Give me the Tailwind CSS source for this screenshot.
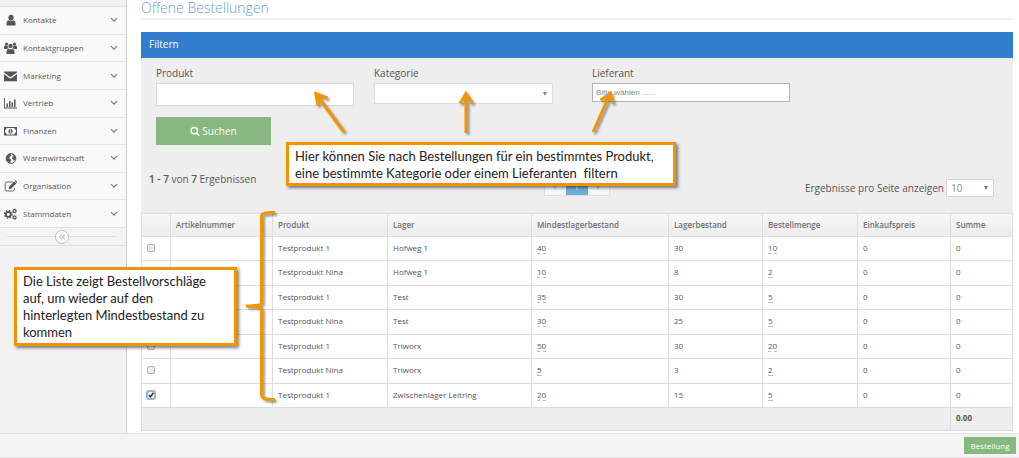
<!DOCTYPE html>
<html lang="de">
<head>
<meta charset="utf-8">
<title>Offene Bestellungen</title>
<script src="https://cdn.jsdelivr.net/npm/@tailwindcss/browser@4"></script>
</head>
<body class="relative flex min-h-screen flex-col overflow-x-hidden bg-white font-['Open_Sans',sans-serif] text-[8px] text-[#555]">
<svg class="hidden">
  <symbol id="chev" viewBox="0 0 8 6"><path d="M1 1.2 4 4.2 7 1.2" fill="none" stroke="#777" stroke-width="1.2"/></symbol>
</svg>

<div class="flex flex-1">
  <aside class="w-[127px] shrink-0 border-r border-[#ccc] bg-[#f2f2f2] pt-1.5">
    <nav class="grid h-[221px] grid-rows-8 bg-[#f9f9f9] text-[8px] text-[#585858]">
      <a href="#" class="flex items-center border-t border-[#e4e4e4] pr-2 pl-1">
        <svg class="mr-1.5 h-3 w-[13px]" viewBox="0 0 13 12" fill="#555"><ellipse cx="7" cy="3.8" rx="2.6" ry="3"/><path d="M2.500 11.500V9.500C2.500 7.800 3.400 6.600 4.700 6.300C6 7.600 8 7.600 9.300 6.300C10.600 6.600 11.500 7.800 11.500 9.500V11.500Z"/></svg>
        <span class="flex-1">Kontakte</span><svg class="h-1.5 w-2"><use href="#chev"/></svg></a>
      <a href="#" class="flex items-center border-t border-[#e4e4e4] pr-2 pl-1">
        <svg class="mr-1.5 h-3 w-[13px]" viewBox="0 0 13 12" fill="#555"><circle cx="2.500" cy="2" r="1.600"/><circle cx="10.500" cy="2" r="1.600"/><circle cx="6.500" cy="3.900" r="2.200"/><path d="M0 7V5.200C0 4.200 .7 3.600 1.500 3.600H3.700C3.600 5 4 5.700 4.600 6.300C3.900 6.400 3.300 6.600 2.900 7ZM13 7V5.200C13 4.200 12.300 3.600 11.500 3.600H9.300C9.400 5 9 5.700 8.400 6.300C9.100 6.400 9.700 6.600 10.100 7ZM2.500 12V9.800C2.500 8 3.500 6.900 4.800 6.700C5.800 7.400 7.200 7.400 8.200 6.700C9.500 6.900 10.500 8 10.500 9.800V12Z"/></svg>
        <span class="flex-1">Kontaktgruppen</span><svg class="h-1.5 w-2"><use href="#chev"/></svg></a>
      <a href="#" class="flex items-center border-t border-[#e4e4e4] pr-2 pl-1">
        <svg class="mr-1.5 h-3 w-[13px]" viewBox="0 0 13 12" fill="#555"><path d="M0 1.500h13v1L6.500 7.300 0 2.500zM0 4l5.300 4q1.200.900 2.400 0L13 4v7.300H0z"/></svg>
        <span class="flex-1">Marketing</span><svg class="h-1.5 w-2"><use href="#chev"/></svg></a>
      <a href="#" class="flex items-center border-t border-[#e4e4e4] pr-2 pl-1">
        <svg class="mr-1.5 h-3 w-[13px]" viewBox="0 0 13 12" fill="#555"><path d="M0 1h.9v9.600H13v.900H0zM2.500 6.500h1.500V10H2.500zM5 4h1.500v6H5zM7.500 5.500H9V10H7.500zM10 2.500h1.500V10H10z"/></svg>
        <span class="flex-1">Vertrieb</span><svg class="h-1.5 w-2"><use href="#chev"/></svg></a>
      <a href="#" class="flex items-center border-t border-[#e4e4e4] pr-2 pl-1">
        <svg class="mr-1.5 h-3 w-[13px]" viewBox="0 0 13 12"><path fill="#555" fill-rule="evenodd" d="M0 2h13v8.500H0zM2.700 3Q2.500 4.700 1 4.900v2.700Q2.500 7.800 2.700 9.500h7.600Q10.500 7.800 12 7.600V4.900Q10.500 4.700 10.300 3z"/><ellipse cx="6.500" cy="6.250" rx="2" ry="2.600" fill="#555"/><path d="M5.800 5.200 6.600 4.600v3M5.700 7.800h1.700" stroke="#fff" stroke-width=".8" fill="none"/></svg>
        <span class="flex-1">Finanzen</span><svg class="h-1.5 w-2"><use href="#chev"/></svg></a>
      <a href="#" class="flex items-center border-t border-[#e4e4e4] pr-2 pl-1">
        <svg class="mr-1.5 h-3 w-[13px]" viewBox="0 0 13 12"><circle cx="7" cy="6.500" r="4.900" fill="#f9f9f9" stroke="#555" stroke-width="1"/><path fill="#555" d="M2.200 5.500C2.700 3.300 4.500 1.700 7 1.600L6.500 2.800 7.700 3.300 6.500 4.400 5.300 4.900 5.600 6 4.500 6.300 6.300 7l1.200 1L6.600 9.600 6 11.300C4 10.800 2 8.500 2.200 5.500zM8.200 1.700C10.200 2.100 11.800 3.800 12 6L11 7.500 9.800 9 9 7.200 7.800 6.400 8.600 4.700 9.800 4.500 9.200 3.500 8.200 3z"/></svg>
        <span class="flex-1">Warenwirtschaft</span><svg class="h-1.5 w-2"><use href="#chev"/></svg></a>
      <a href="#" class="flex items-center border-t border-[#e4e4e4] pr-2 pl-1">
        <svg class="mr-1.5 h-3 w-[13px]" viewBox="0 0 13 12"><path d="M9 2H3Q1.200 2 1.200 3.800v5.400Q1.200 11 3 11h5.600q1.800 0 1.800-1.800V7.800" fill="none" stroke="#666" stroke-width="1"/><path fill="#555" d="M4.800 9V6.900L10.200 1.500 12.300 3.600 6.900 9zM10.700 1l.6-.5q.4-.3.800 0L13 1.500q.3.400 0 .8l-.500.700z"/></svg>
        <span class="flex-1">Organisation</span><svg class="h-1.5 w-2"><use href="#chev"/></svg></a>
      <a href="#" class="flex items-center border-t border-[#e4e4e4] pr-2 pl-1">
        <svg class="mr-1.5 h-3 w-[13px]" viewBox="0 0 13 12" fill="none" stroke="#555"><circle cx="4.300" cy="6.300" r="2.500" stroke-width="1.800"/><circle cx="4.300" cy="6.300" r="3.900" stroke-width="1.200" stroke-dasharray="1.500 1.563"/><circle cx="10.600" cy="3" r="1.400" stroke-width="1.100"/><circle cx="10.600" cy="3" r="2.200" stroke-width=".6" stroke-dasharray=".9 .828"/><circle cx="10.600" cy="9.400" r="1.400" stroke-width="1.100"/><circle cx="10.600" cy="9.400" r="2.200" stroke-width=".6" stroke-dasharray=".9 .828"/></svg>
        <span class="flex-1">Stammdaten</span><svg class="h-1.5 w-2"><use href="#chev"/></svg></a>
    </nav>
    <div class="flex h-[19px] items-center border-y border-[#e0e0e0] bg-[#f3f3f3] pr-2.5 pl-[7px]">
      <span class="h-px flex-1 bg-[#dedede]"></span>
      <button type="button" aria-label="Menü einklappen" class="flex size-3.5 items-center justify-center rounded-full border border-[#bbb] bg-white">
        <svg class="size-2" viewBox="0 0 8 8" fill="none" stroke="#999"><path d="M4 1.500 1.500 4 4 6.500M7 1.500 4.500 4 7 6.500"/></svg></button>
      <span class="h-px flex-1 bg-[#dedede]"></span>
    </div>
  </aside>

  <main class="min-w-0 flex-1 pr-1.5 pb-0.5 pl-3.5">
    <h1 class="h-5 border-b-2 border-[#edf2f6] text-[14px] leading-4 font-light text-[#6c9fd2]">Offene Bestellungen</h1>
    <section class="mt-3 bg-[#eee]">
      <h2 class="flex h-[26px] items-center bg-[#307ecc] px-2 pb-0.5 text-[10px] text-white">Filtern</h2>
      <form class="h-[155px]">
        <div class="flex pt-[7px] pl-[15px] text-[10px] leading-4">
          <div class="w-[218px]"><label for="produkt" class="block">Produkt</label>
            <input id="produkt" type="text" class="mt-0.5 block h-[23px] w-[198px] border border-[#d8d8d8] bg-white px-1"></div>
          <div class="w-[218px]"><label for="kategorie" class="block">Kategorie</label>
            <div class="relative mt-0.5 w-[179px]"><select id="kategorie" class="block h-[21px] w-full appearance-none border border-[#dcdcdc] bg-white px-1"><option></option></select>
            <svg class="pointer-events-none absolute top-[9px] right-1.5 h-1 w-1" viewBox="0 0 4 4"><path d="M0 0h4L2 4z" fill="#888"/></svg></div></div>
          <div class="w-[218px]"><label for="lieferant" class="block">Lieferant</label>
            <input id="lieferant" type="text" placeholder="Bitte wählen ......" class="mt-0.5 block h-[19px] w-[198px] border border-[#b4b4b4] bg-white px-[3px] font-['Liberation_Sans',sans-serif] text-[8px] placeholder:text-[#888]"></div>
        </div>
        <button type="button" class="mt-[11px] ml-[15px] flex h-7 w-[115px] items-center justify-center gap-0.5 bg-[#87b87f] text-[10px] text-white">
          <svg class="size-2.5" viewBox="0 0 1792 1792" fill="#fff"><path d="M1216 832q0-185-131.500-316.500t-316.500-131.500-316.500 131.500-131.500 316.500 131.500 316.500 316.500 131.500 316.500-131.500 131.500-316.500zm512 832q0 52-38 90t-90 38q-54 0-90-38l-343-342q-179 124-399 124-143 0-273.500-55.500t-225-150-150-225-55.500-273.500 55.500-273.500 150-225 225-150 273.500-55.500 273.500 55.500 225 150 150 225 55.500 273.500q0 220-124 399l343 343q37 37 37 90z"/></svg>Suchen</button>
        <div class="mt-6 flex h-12 items-start px-2 text-[10px] leading-4">
          <p class="flex-1 pt-0.5"><b class="font-semibold">1 - 7</b> von <b class="font-semibold">7</b> Ergebnissen</p>
          <div class="mt-2 ml-2.5 flex h-[19px] w-[66px] border border-[#ddd] bg-[#f8f8f8] text-center text-[#aaa]">
            <a href="#" class="flex-1">‹</a><a href="#" class="w-[22px] bg-[#6faed9] text-white">1</a><a href="#" class="flex-1">›</a></div>
          <div class="flex flex-1 items-center justify-end gap-0.5 pt-2.5 pr-[11px]">
            <label for="pp">Ergebnisse pro Seite anzeigen</label>
            <div class="relative"><select id="pp" class="block h-[18px] w-12 appearance-none border border-[#d5d5d5] bg-white pl-1 text-[10px] text-[#888]"><option>10</option></select>
            <svg class="pointer-events-none absolute top-[7px] right-1.5 h-1 w-1" viewBox="0 0 4 4"><path d="M0 0h4L2 4z" fill="#777"/></svg></div>
          </div>
        </div>
      </form>
      <table class="w-full table-fixed border-collapse border border-[#ddd] text-left [&_td]:border [&_td]:border-[#ddd] [&_td]:px-[5px] [&_td]:pt-0 [&_td]:pb-0.5 [&_th]:border [&_th]:border-[#ddd] [&_th]:px-[5px] [&_th]:py-0 [&_u]:border-b [&_u]:border-dashed [&_u]:border-[#bbb] [&_u]:no-underline [&_input]:block [&_input]:size-2 [&_input]:appearance-none [&_input]:rounded-[2px] [&_input]:border [&_input]:border-[#b0b0b0] [&_input]:bg-[#eee]">
        <colgroup><col class="w-[29px]"><col class="w-[102px]"><col class="w-[115px]"><col class="w-[144px]"><col class="w-[137px]"><col class="w-[94px]"><col class="w-[95px]"><col class="w-[93px]"><col></colgroup>
        <thead><tr class="h-[23px] bg-linear-to-b from-[#f8f8f8] to-[#ececec] [&_th]:font-semibold [&_th]:text-[#707070]"><th></th><th>Artikelnummer</th><th>Produkt</th><th>Lager</th><th>Mindestlagerbestand</th><th>Lagerbestand</th><th>Bestellmenge</th><th>Einkaufspreis</th><th>Summe</th></tr></thead>
        <tbody class="[&_tr]:bg-white [&_tr]:odd:h-6 [&_tr]:even:h-[25px]">
          <tr><td><input type="checkbox" aria-label="Zeile 1"></td><td></td><td>Testprodukt 1</td><td>Hofweg 1</td><td><u>40</u></td><td>30</td><td><u>10</u></td><td>0</td><td>0</td></tr>
          <tr><td><input type="checkbox" aria-label="Zeile 2"></td><td></td><td>Testprodukt Nina</td><td>Hofweg 1</td><td><u>10</u></td><td>8</td><td><u>2</u></td><td>0</td><td>0</td></tr>
          <tr><td><input type="checkbox" aria-label="Zeile 3"></td><td></td><td>Testprodukt 1</td><td>Test</td><td><u>35</u></td><td>30</td><td><u>5</u></td><td>0</td><td>0</td></tr>
          <tr><td><input type="checkbox" aria-label="Zeile 4"></td><td></td><td>Testprodukt Nina</td><td>Test</td><td><u>30</u></td><td>25</td><td><u>5</u></td><td>0</td><td>0</td></tr>
          <tr><td><input type="checkbox" aria-label="Zeile 5"></td><td></td><td>Testprodukt 1</td><td>Triworx</td><td><u>50</u></td><td>30</td><td><u>20</u></td><td>0</td><td>0</td></tr>
          <tr><td><input type="checkbox" aria-label="Zeile 6"></td><td></td><td>Testprodukt Nina</td><td>Triworx</td><td><u>5</u></td><td>3</td><td><u>2</u></td><td>0</td><td>0</td></tr>
          <tr><td><div class="relative"><input type="checkbox" checked aria-label="Zeile 7" class="ring-1 ring-[#8ab4ee]"><svg class="pointer-events-none absolute top-0 left-0 size-2" viewBox="0 0 8 8"><path d="M1.800 4.200 3.500 5.900 6.400 1.800" fill="none" stroke="#333" stroke-width="1.500"/></svg></div></td><td></td><td>Testprodukt 1</td><td>Zwischenlager Leitring</td><td><u>20</u></td><td>15</td><td><u>5</u></td><td>0</td><td>0</td></tr>
        </tbody>
        <tfoot><tr class="h-[23px] font-bold text-[#555]"><td colspan="8"></td><td>0.00</td></tr></tfoot>
      </table>
    </section>
  </main>
</div>

<footer class="flex h-[25px] items-center justify-end border-y border-[#e2e2e2] bg-[#f4f4f4] pr-[3px]">
  <button type="button" class="h-[17px] w-[52px] bg-[#87b87f] text-[8px] text-white">Bestellung</button>
</footer>

<!-- Hinweise über der Seite -->
<div class="absolute top-[142px] left-[286px] w-[390px] border-3 border-[#f29400] bg-white px-1.5 pt-[3px] pb-px font-['Lato',sans-serif] text-[13px] leading-[17px] text-[#222] shadow-[2px_2px_3px_rgba(0,0,0,0.5)] [font-variant-ligatures:none]">Hier können Sie nach Bestellungen für ein bestimmtes Produkt,<br>eine bestimmte Kategorie oder einem Lieferanten &nbsp;filtern</div>
<div class="absolute top-[267px] left-[14px] w-[223px] border-3 border-[#f29400] bg-white px-1.5 pt-[3px] pb-0.5 font-['Lato',sans-serif] text-[13px] leading-[17px] text-[#222] shadow-[2px_2px_3px_rgba(0,0,0,0.5)] [font-variant-ligatures:none]">Die Liste zeigt Bestellvorschläge<br>auf, um wieder auf den<br>hinterlegten Mindestbestand zu<br>kommen</div>
<svg class="pointer-events-none absolute top-0 left-0 h-[458px] w-[700px] drop-shadow-[2px_2px_1px_rgba(0,0,0,0.4)]" viewBox="0 0 700 458" fill="none" stroke="#f29400" stroke-width="3">
  <path d="M344 132 316 94M318 105.500 315.800 93.500 327.500 98"/>
  <path d="M466 133V94M460 103.500 466 93.500 472.500 103.500"/>
  <path d="M593 132 610 94M600.500 100 610.500 93.500 612.700 103.500"/>
  <path d="M275 212.500Q262 212 261.500 215.500V303Q261.500 306 246 306Q261.500 306 261.500 309V395Q262 400 275 399.500"/>
</svg>
</body>
</html>
